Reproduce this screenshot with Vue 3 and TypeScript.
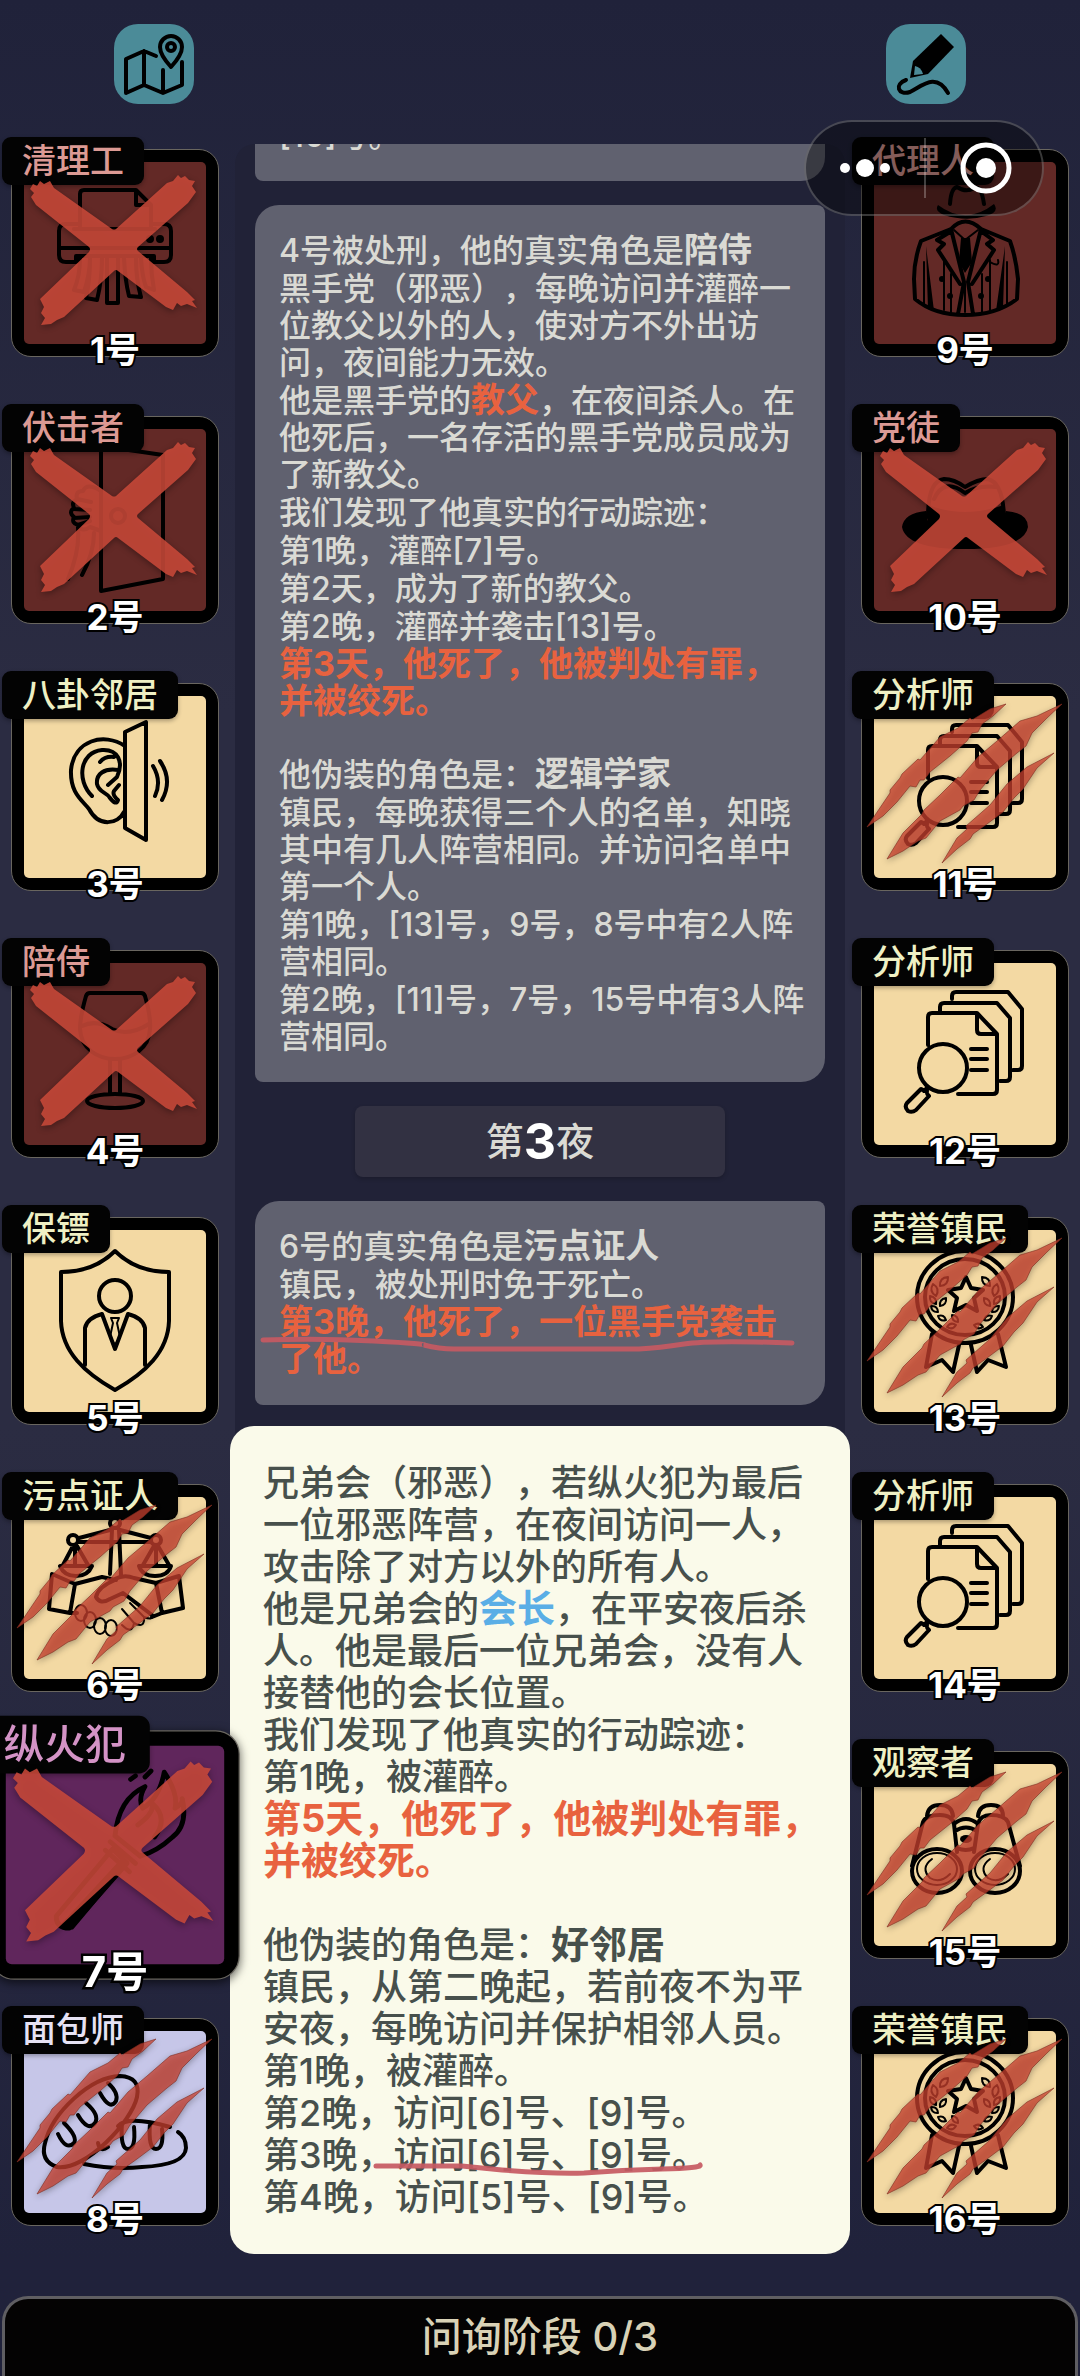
<script setup lang="ts">
type Camp = 'mafia' | 'town' | 'arson' | 'neutral'
type Mark = 'cross' | 'claw' | ''
type IconName =
  | 'shredder' | 'door' | 'ear' | 'glass' | 'shield' | 'scales' | 'torch' | 'bread'
  | 'suit' | 'fedora' | 'files' | 'medal' | 'binoculars'

interface Seat {
  no: number
  role: string
  camp: Camp
  mark: Mark
  icon: IconName
  selected?: boolean
}
interface Run {
  t: string
  k?: 'bold' | 'red' | 'blue'
}
type Para = Run[]

// Ellipse as path data, so that an icon stays a single outline path.
const oval = (x: number, y: number, rx: number, ry: number = rx): string =>
  `M${x - rx} ${y}a${rx} ${ry} 0 1 0 ${rx * 2} 0a${rx} ${ry} 0 1 0 ${-rx * 2} 0z`

const leaf = (x: number, y: number, dx: number, dy: number): string =>
  `M${x} ${y}q${dy / 2 + dx / 2} ${dy / 2 - dx / 2} ${dx} ${dy}q${-dy / 2 - dx / 2} ${dx / 2 - dy / 2} ${-dx} ${-dy}z`

const icons: Record<IconName, { line: string; fine?: string; solid?: string }> = {
  shredder: {
    line:
      'M56 64V32q0-4 4-4H112L127 43V64M112 28V43H127M56 62H42q-7 0-7 7V93q0 7 7 7H52V94H130V100H140q7 0 7-7V69q0-7-7-7H127M35 86H147M50 67H131' +
      'M56 96Q56 114 50 128L60 130Q66 112 66 96M66 96Q66 118 62 136L73 138Q78 118 78 96M83 96V141H94V96M100 96Q101 118 105 134L117 135Q112 118 112 96M117 96Q118 114 122 125L130 128Q127 112 127 96',
    solid: oval(126, 77, 4) + oval(136, 77, 4),
  },
  door: {
    line:
      'M77 20V162L139 150V26L77 17' + oval(94, 87, 7, 7) +
      'M77 62q-14-9-18 0q-8 0-6 8q-6 3-3 9q-6 4 0 9q-3 6 4 8q4 8 12 2l11 4M53 70l14 3M50 80l16 1M50 89l16-1M54 96l12-4M54 98Q56 122 44 150M70 104Q70 124 58 146',
  },
  ear: {
    line:
      'M101 50C80 36 50 44 47 74C46 97 58 104 65 113C75 132 94 128 100 116' +
      'M68 100C52 84 56 56 78 54C94 53 100 66 93 81L84 89M76 66Q81 60 90 61M94 74C80 72 72 78 73 88C75 97 83 96 86 102Q92 110 94 104Q88 99 90 95L95 89' +
      'M101 36L122 26V144L101 132zM129 70Q138 85 131 100M136 65Q149 84 138 104',
  },
  glass: {
    line:
      'M66 30H117Q120 30 121 33Q127 54 126 66C125 86 108 96 91 96S57 86 56 66Q56 54 62 33Q63 30 66 30zM58 63Q72 56 88 66Q104 74 125 61M86 96V131M96 96V131' +
      oval(91, 138, 28, 7),
  },
  shield: {
    line:
      'M91 21Q112 42 145 42V91C144 122 121 143 91 160C61 143 38 122 37 91V42Q70 42 91 21z' + oval(91, 66, 16) +
      'M61 135V98Q63 88 78 84L91 119L104 84Q119 88 121 98V135',
    fine: 'M87 88H95L93 93L96 107L91 115L86 107L89 93z',
  },
  scales: {
    line:
      oval(91, 26, 5) + oval(49, 43, 5) + oval(132, 43, 5) +
      'M55 41L86 33M96 33L127 41M56 45H127M88 33L86 77M95 33L97 78' +
      'M49 49L39 68M51 49L51 68M53 49L64 68M36 69H68Q64 79 52 79Q40 79 36 69zM130 49L119 68M132 49V68M134 49L145 68M115 69H147Q144 79 131 79Q118 79 115 69z' +
      'M51 87L28 77L25 112L46 116zM132 86L155 79L159 111L138 116z' +
      'M51 87L78 80L92 83M91 82Q100 77 110 81L132 86M91 83Q74 90 72 100Q76 108 86 102L99 96L128 118M46 116L53 116M138 116L128 120',
    fine:
      oval(57, 116, 6, 8) + oval(66, 123, 6, 8) + oval(76, 129, 6, 8) + oval(87, 131, 6, 8) +
      'M98 128Q108 138 110 126Q121 132 120 120Q130 124 128 117M98 112L110 126M106 106L120 120',
  },
  torch: {
    line:
      'M42 142L89 86L101 98L53 152Q42 152 42 142zM87 80L108 98M83 87L103 105M91 75L112 92' +
      'M91 75Q94 44 116 34Q110 44 114 52Q128 44 132 22Q144 40 141 52Q148 48 147 44Q152 66 139 76Q126 88 112 92M110 66Q124 56 122 48Q136 60 124 76M104 28l4-3M116 26l5-5',
    solid: 'M52 142L98 92L103 97L56 153Q48 154 46 148z',
  },
  bread: {
    line:
      'M33 136Q16 130 21 112C28 82 66 46 96 45Q117 46 113 66C108 90 62 140 33 136z' +
      'M34 103Q42 120 50 112Q54 106 40 92M54 84Q64 101 71 92Q76 84 62 72M76 62Q86 80 92 70Q95 62 84 52' +
      'M60 133Q90 139 118 136Q161 134 162 117Q162 106 154 101M94 95Q104 84 146 96M98 92Q96 118 104 118Q112 118 110 96M126 92Q124 118 132 118Q140 118 138 98M74 112Q76 122 84 116',
  },
  suit: {
    line:
      'M76 42Q77 26 83 25Q92 31 100 26Q107 22 110 42' +
      'M77 67Q91 52 107 67L136 79Q142 96 144 117L143 137Q122 153 91 153Q60 153 41 137L40 117Q40 98 47 79z' +
      'M77 67L90 120L84 152M107 67L94 120L99 152M76 70L63 78L70 82L64 88L86 122M108 70L119 78L113 82L120 88L98 122',
    fine: 'M70 98V148M116 98V148M50 100V143M133 100V143M77 112V150M108 112V150M116 100q10 6 8-2M91 122V150M80 68L91 78L104 68',
    solid:
      'M64 43Q92 64 120 42Q126 50 112 54Q92 60 70 53Q60 49 64 43zM87 76H96L98 100L91 111L85 100zM52 84L60 149L54 147zM131 84L122 149L129 147z' +
      oval(68, 117, 3) + oval(114, 117, 3) + oval(76, 134, 3) + oval(107, 134, 3),
  },
  fedora: {
    line: 'M54 88Q54 52 70 50Q80 50 91 58Q104 50 114 50Q129 54 130 88M60 70Q70 48 91 64Q104 56 122 58',
    solid:
      'M28 98Q30 84 52 82L54 92Q80 102 128 92L132 82Q154 84 154 98Q150 120 91 120Q32 120 28 98zM54 76Q90 90 130 76V94Q90 104 54 94z',
  },
  files: {
    line:
      'M54 82V54Q54 50 58 50H103L123 71V127Q123 131 119 131H84M103 50V67Q103 71 107 71H123' +
      'M66 48V44Q66 40 70 40H123L136 55V114Q136 118 132 118H126M78 36V33Q78 29 82 29H134L148 46V103Q148 107 144 107H139' +
      'M97 86H113M97 96H113M97 107H113' + oval(69, 105, 24) + 'M54 124L50 128M47 126L33 140Q30 144 34 148Q38 150 42 147L55 133Q52 130 53 128Q50 128 47 126z',
  },
  medal: {
    line:
      oval(91, 67, 48, 46) + oval(91, 67, 40, 38) +
      'M92 47L97 58L109 60L100 68L103 81L92 75L80 81L83 68L74 60L87 58z' +
      'M58 104L52 137L68 130L79 142L85 115M97 115L103 142L114 130L132 137L124 104',
    fine:
      leaf(62, 66, -3, -12) + leaf(66, 56, 8, -9) + leaf(62, 74, -6, -8) + leaf(64, 82, -7, -6) + leaf(66, 76, 6, -8) +
      leaf(72, 90, -8, -4) + leaf(82, 95, -9, 2) + leaf(84, 92, -6, -7) + leaf(120, 66, 3, -12) + leaf(116, 56, -8, -9) +
      leaf(120, 74, 6, -8) + leaf(118, 82, 7, -6) + leaf(116, 76, -6, -8) + leaf(110, 90, 8, -4) + leaf(100, 95, 9, 2),
  },
  binoculars: {
    line:
      oval(63, 107, 25, 22) + oval(121, 107, 25, 22) +
      'M38 102L49 58Q52 51 66 51Q78 51 80 60L83 88M53 52Q54 41 66 41Q78 41 79 52M146 102L134 58Q130 51 117 51Q106 51 104 60L100 88M104 52Q105 41 117 41Q129 41 129 52' +
      'M80 60Q92 50 104 60M81 67Q92 60 103 67M83 84Q92 88 100 84',
    fine: oval(63, 105, 20, 16) + oval(121, 105, 20, 16) + 'M58 95Q46 104 56 114Q66 120 76 110M116 95Q104 104 114 114Q124 120 134 110',
    solid: oval(92, 75, 6, 4),
  },
}

const crossPath =
  'M9 22L13 24L16 19L20 22L26 19L30 26L88 67Q90 68 92 67L143 21L149 19L154 13L157 16L161 14L165 18L171 19L168 24L172 30L164 41L114 85Q112 87 114 89L163 130L171 138L168 139L173 146L163 142L157 144L153 141L149 148L142 145L94 109Q92 107 90 109L40 155L33 158L27 162L17 163L21 156L17 151L20 145L16 137L65 90Q67 87 65 85L12 43L7 35L10 31L6 27z'
const clawPath =
  'M-7 131L16 97L16 94L26 82L28 78L44 63L46 64L66 41L84 32L96 22L98 24L116 13L132 8L119 20L108 28L104 36L98 37L93 45L76 60L56 76L50 84L46 84L42 91L36 90L23 106L9 120z' +
  'M13 163L29 137L48 118L50 114L66 99L84 81L86 82L104 61L123 45L146 25L163 20L188 8L173 22L158 37L152 50L143 57L123 74L106 94L100 104L89 110L86 114L66 125L52 142L44 145L29 155z' +
  'M68 167L83 142L93 133L92 130L116 109L133 88L153 71L180 57L163 72L149 93L140 102L129 116L113 128L99 138L96 143L83 153z'

const left: Seat[] = [
  { no: 1, role: '清理工', camp: 'mafia', mark: 'cross', icon: 'shredder' },
  { no: 2, role: '伏击者', camp: 'mafia', mark: 'cross', icon: 'door' },
  { no: 3, role: '八卦邻居', camp: 'town', mark: '', icon: 'ear' },
  { no: 4, role: '陪侍', camp: 'mafia', mark: 'cross', icon: 'glass' },
  { no: 5, role: '保镖', camp: 'town', mark: '', icon: 'shield' },
  { no: 6, role: '污点证人', camp: 'town', mark: 'claw', icon: 'scales' },
  { no: 7, role: '纵火犯', camp: 'arson', mark: 'cross', icon: 'torch', selected: true },
  { no: 8, role: '面包师', camp: 'neutral', mark: 'claw', icon: 'bread' },
]
const right: Seat[] = [
  { no: 9, role: '代理人', camp: 'mafia', mark: '', icon: 'suit' },
  { no: 10, role: '党徒', camp: 'mafia', mark: 'cross', icon: 'fedora' },
  { no: 11, role: '分析师', camp: 'town', mark: 'claw', icon: 'files' },
  { no: 12, role: '分析师', camp: 'town', mark: '', icon: 'files' },
  { no: 13, role: '荣誉镇民', camp: 'town', mark: 'claw', icon: 'medal' },
  { no: 14, role: '分析师', camp: 'town', mark: '', icon: 'files' },
  { no: 15, role: '观察者', camp: 'town', mark: 'claw', icon: 'binoculars' },
  { no: 16, role: '荣誉镇民', camp: 'town', mark: 'claw', icon: 'medal' },
]
const sides = [
  { key: 'left', seats: left },
  { key: 'right', seats: right },
]

const executed: Para[][] = [
  [
    [{ t: '4号被处刑，他的真实角色是' }, { t: '陪侍', k: 'bold' }],
    [{ t: '黑手党（邪恶），每晚访问并灌醉一位教父以外的人，使对方不外出访问，夜间能力无效。' }],
    [{ t: '他是黑手党的' }, { t: '教父', k: 'red' }, { t: '，在夜间杀人。在他死后，一名存活的黑手党成员成为了新教父。' }],
    [{ t: '我们发现了他真实的行动踪迹：' }],
    [{ t: '第1晚，灌醉[7]号。' }],
    [{ t: '第2天，成为了新的教父。' }],
    [{ t: '第2晚，灌醉并袭击[13]号。' }],
    [{ t: '第3天，他死了，他被判处有罪，并被绞死。', k: 'red' }],
  ],
  [
    [{ t: '他伪装的角色是：' }, { t: '逻辑学家', k: 'bold' }],
    [{ t: '镇民，每晚获得三个人的名单，知晓其中有几人阵营相同。并访问名单中第一个人。' }],
    [{ t: '第1晚，[13]号，9号，8号中有2人阵营相同。' }],
    [{ t: '第2晚，[11]号，7号，15号中有3人阵营相同。' }],
  ],
]
const night: Para[] = [
  [{ t: '6号的真实角色是' }, { t: '污点证人', k: 'bold' }],
  [{ t: '镇民，被处刑时免于死亡。' }],
  [{ t: '第3晚，他死了，一位黑手党袭击了他。', k: 'red' }],
]
const dossier: Para[][] = [
  [
    [{ t: '兄弟会（邪恶），若纵火犯为最后一位邪恶阵营，在夜间访问一人，攻击除了对方以外的所有人。' }],
    [{ t: '他是兄弟会的' }, { t: '会长', k: 'blue' }, { t: '，在平安夜后杀人。他是最后一位兄弟会，没有人接替他的会长位置。' }],
    [{ t: '我们发现了他真实的行动踪迹：' }],
    [{ t: '第1晚，被灌醉。' }],
    [{ t: '第5天，他死了，他被判处有罪，并被绞死。', k: 'red' }],
  ],
  [
    [{ t: '他伪装的角色是：' }, { t: '好邻居', k: 'bold' }],
    [{ t: '镇民，从第二晚起，若前夜不为平安夜，每晚访问并保护相邻人员。' }],
    [{ t: '第1晚，被灌醉。' }],
    [{ t: '第2晚，访问[6]号、[9]号。' }],
    [{ t: '第3晚，访问[6]号、[9]号。' }],
    [{ t: '第4晚，访问[5]号、[9]号。' }],
  ],
]
</script>

<template>
  <div class="page">
    <header class="tools">
      <button class="tool" type="button" aria-label="地图">
        <svg viewBox="0 0 80 80" fill="none" stroke="#000" stroke-width="4" stroke-linecap="round" stroke-linejoin="round">
          <path d="M42 32L30 27L12 35V69L30 61L49 69L68 61V38M30 27V61M49 46V69" />
          <path d="M57 43Q46 31 46 23A11 11 0 0 1 68 23Q68 31 57 43z" />
          <circle cx="57" cy="23" r="4" />
        </svg>
      </button>
      <button class="tool" type="button" aria-label="画笔">
        <svg viewBox="0 0 80 80">
          <path d="M55 10L68 23L42 50L24 54L27 37z" />
          <path d="M29 42Q35 43 37 50L28 51z" fill="#4b8b98" />
          <path d="M20 56C8 60 12 72 24 68C36 62 50 48 62 69" fill="none" stroke="#000" stroke-width="4" stroke-linecap="round" />
        </svg>
      </button>
    </header>

    <div class="capsule">
      <button type="button" aria-label="更多">
        <svg width="72" height="24" viewBox="0 0 72 24" fill="#fff">
          <circle cx="16" cy="12" r="5" /><circle cx="36" cy="12" r="9" /><circle cx="56" cy="12" r="5" />
        </svg>
      </button>
      <button type="button" aria-label="关闭">
        <svg width="56" height="56" viewBox="0 0 56 56">
          <circle cx="28" cy="28" r="23" fill="none" stroke="#fff" stroke-width="5" /><circle cx="28" cy="28" r="10" fill="#fff" />
        </svg>
      </button>
    </div>

    <main class="board">
      <ul v-for="side in sides" :key="side.key" class="seats" :class="side.key">
        <li v-for="s in side.seats" :key="s.no">
          <button type="button" class="seat" :class="[s.camp, { selected: s.selected }]">
            <svg class="face" viewBox="0 0 182 182">
              <path :d="icons[s.icon].line" class="line" />
              <path v-if="icons[s.icon].fine" :d="icons[s.icon].fine" class="fine" />
              <path v-if="icons[s.icon].solid" :d="icons[s.icon].solid" />
            </svg>
            <span class="role">{{ s.role }}</span>
            <svg v-if="s.mark" class="mark" viewBox="0 0 182 182">
              <path v-if="s.mark === 'cross'" :d="crossPath" class="cross" />
              <path v-else :d="clawPath" class="claw" />
            </svg>
            <span class="no">{{ s.no }}号</span>
          </button>
        </li>
      </ul>

      <section class="center">
        <div class="log">
          <article class="bubble earlier"><p>[10]号。</p></article>
          <article class="bubble">
            <div v-for="(block, b) in executed" :key="b" class="block">
              <p v-for="(para, i) in block" :key="i"><span v-for="(r, j) in para" :key="j" :class="r.k">{{ r.t }}</span></p>
            </div>
          </article>
          <h2 class="phase"><span>第</span><b>3</b><span>夜</span></h2>
          <article class="bubble">
            <div class="block">
              <p v-for="(para, i) in night" :key="i"><span v-for="(r, j) in para" :key="j" :class="r.k">{{ r.t }}</span></p>
            </div>
            <svg class="stroke night-stroke" viewBox="0 0 540 20">
              <path d="M4 5Q60 3 115 6T165 10Q180 14 195 14H380Q400 13 425 9T533 8" />
            </svg>
          </article>
        </div>

        <aside class="dossier">
          <div v-for="(block, b) in dossier" :key="b" class="block">
            <p v-for="(para, i) in block" :key="i"><span v-for="(r, j) in para" :key="j" :class="r.k">{{ r.t }}</span></p>
          </div>
          <svg class="stroke visit-stroke" viewBox="0 0 332 20">
            <path d="M4 6H90Q110 8 130 10Q180 14 212 13Q250 10 290 9T328 5" />
          </svg>
        </aside>
      </section>
    </main>

    <footer class="stage">问询阶段 0/3</footer>
  </div>
</template>

<style>
body {
  margin: 0;
  background: #22233a;
}
</style>

<style scoped>
.page {
  position: relative;
  display: flex;
  flex-direction: column;
  min-height: 100vh;
  overflow: hidden;
  background: linear-gradient(#20223a, #2b2c42 30%, #2b2c42 60%, #20223b 95%);
  color: #dadad4;
  font-family: Inter, "Noto Sans CJK SC", sans-serif;
  font-weight: 500;
  text-spacing-trim: space-all;
}
button {
  padding: 0;
  border: 0;
  background: none;
  color: inherit;
  font: inherit;
}
p,
h2,
ul {
  margin: 0;
  padding: 0;
}
.tools {
  display: flex;
  justify-content: space-between;
  padding: 24px 114px 16px;
}
.tool {
  width: 80px;
  height: 80px;
  border-radius: 24px;
  background: #4b8b98;
}
.tool svg {
  display: block;
}
.capsule {
  position: absolute;
  z-index: 5;
  top: 120px;
  right: 36px;
  display: flex;
  box-sizing: border-box;
  width: 240px;
  height: 96px;
  border: 2px solid rgba(255, 255, 255, 0.22);
  border-radius: 48px;
  background: rgba(0, 0, 0, 0.4);
}
.capsule button {
  display: flex;
  flex: 1;
  align-items: center;
  justify-content: center;
}
.capsule button + button::before {
  content: "";
  align-self: center;
  width: 2px;
  height: 60px;
  margin-right: 32px;
  background: rgba(255, 255, 255, 0.25);
}
.capsule button + button {
  justify-content: flex-start;
}
.board {
  display: grid;
  grid-template-columns: 208px minmax(0, 1fr) 208px;
  column-gap: 16px;
  padding: 24px 11px 0;
}
.seats {
  display: flex;
  flex-direction: column;
  gap: 59px;
  grid-row: 1;
  padding-top: 5px;
  list-style: none;
}
.seats.left {
  grid-column: 1;
}
.seats.right {
  grid-column: 3;
}
.seat {
  position: relative;
  z-index: 1;
  display: block;
  box-sizing: border-box;
  width: 208px;
  height: 208px;
  padding: 12px;
  border: 1px solid #69665f;
  border-radius: 20px;
  background: #000;
}
.selected {
  z-index: 3;
  transform: scale(1.2);
  box-shadow: 0 2px 8px rgba(0, 0, 0, 0.6);
}
.face {
  display: block;
  width: 100%;
  height: 100%;
  border-radius: 5px;
}
.line,
.fine {
  fill: none;
  stroke: #000;
  stroke-width: 4;
  stroke-linecap: round;
  stroke-linejoin: round;
}
.fine {
  stroke-width: 2;
}
.mafia .face {
  background: #632926;
}
.town .face {
  background: #f3d9a3;
}
.arson .face {
  background: #60265c;
}
.neutral .face {
  background: #c6c6e8;
}
.role {
  position: absolute;
  top: -13px;
  left: -10px;
  padding: 0 20px;
  border-radius: 9px;
  background: #030303;
  box-shadow: 0 2px 4px rgba(0, 0, 0, 0.3);
  font-size: 34px;
  line-height: 48px;
  white-space: nowrap;
}
.mafia .role {
  color: #dc9a94;
}
.town .role {
  color: #eff0c4;
}
.arson .role {
  color: #d493c6;
}
.neutral .role {
  color: #e6e2f4;
}
.mark {
  position: absolute;
  top: 12px;
  left: 12px;
  width: 182px;
  height: 182px;
  overflow: visible;
  filter: drop-shadow(0 2px 3px rgba(0, 0, 0, 0.4));
}
.cross {
  fill: #cc4a39;
  fill-opacity: 0.85;
}
.claw {
  fill: #c8402f;
  fill-opacity: 0.75;
  stroke: #7d2a1e;
  stroke-opacity: 0.6;
  stroke-width: 1;
}
.no {
  position: absolute;
  right: 0;
  bottom: -14px;
  left: 0;
  color: #fff;
  font-size: 35px;
  font-weight: 700;
  line-height: 40px;
  text-align: center;
  -webkit-text-stroke: 4px #000;
  paint-order: stroke fill;
}
.center {
  grid-row: 1;
  grid-column: 2;
}
.log {
  display: flex;
  flex-direction: column;
  gap: 24px;
  overflow: hidden;
  padding: 0 20px 45px;
  border-radius: 20px;
  background: #212237;
}
.bubble {
  position: relative;
  padding: 27px 18px 27px 24px;
  border-radius: 24px 8px 24px 8px;
  background: #60616f;
  font-size: 32px;
  line-height: 37px;
}
.bubble .block {
  display: flex;
  flex-direction: column;
  gap: 1px;
}
.bubble .block + .block {
  margin-top: 36px;
}
.earlier {
  margin-top: -54px;
}
.bold,
.red,
.blue {
  font-weight: 700;
}
.bubble .bold,
.bubble .red {
  font-size: 34px;
  line-height: 36px;
}
.red {
  color: #e8623f;
}
.blue {
  color: #5aaee6;
}
.phase {
  display: flex;
  align-items: center;
  align-self: center;
  justify-content: center;
  width: 370px;
  border-radius: 8px;
  background: #323142;
  box-shadow: 0 2px 4px rgba(0, 0, 0, 0.2);
  font-size: 38px;
  font-weight: 500;
  line-height: 71px;
}
.phase b {
  color: #fff;
  font-size: 50px;
  font-weight: 700;
}
.dossier {
  position: relative;
  z-index: 2;
  margin: -24px -5px 0;
  padding: 36px 24px 36px 33px;
  border-radius: 24px;
  background: #fafaea;
  color: #47504c;
  font-size: 36px;
  line-height: 42px;
}
.dossier .block + .block {
  margin-top: 42px;
}
.dossier .bold,
.dossier .red,
.dossier .blue {
  font-size: 38px;
  line-height: 40px;
}
.stroke {
  position: absolute;
  fill: none;
  stroke: #c65a62;
  stroke-width: 5;
  stroke-linecap: round;
  opacity: 0.92;
}
.night-stroke {
  top: 134px;
  left: 4px;
  width: 540px;
}
.visit-stroke {
  bottom: 74px;
  left: 142px;
  width: 332px;
}
.stage {
  flex: 1;
  margin: 42px 2px 0;
  border: 3px solid #5f5e62;
  border-bottom: 0;
  border-radius: 26px 26px 0 0;
  background: #040303;
  color: #d9d2b6;
  font-size: 40px;
  line-height: 76px;
  text-align: center;
}
</style>
